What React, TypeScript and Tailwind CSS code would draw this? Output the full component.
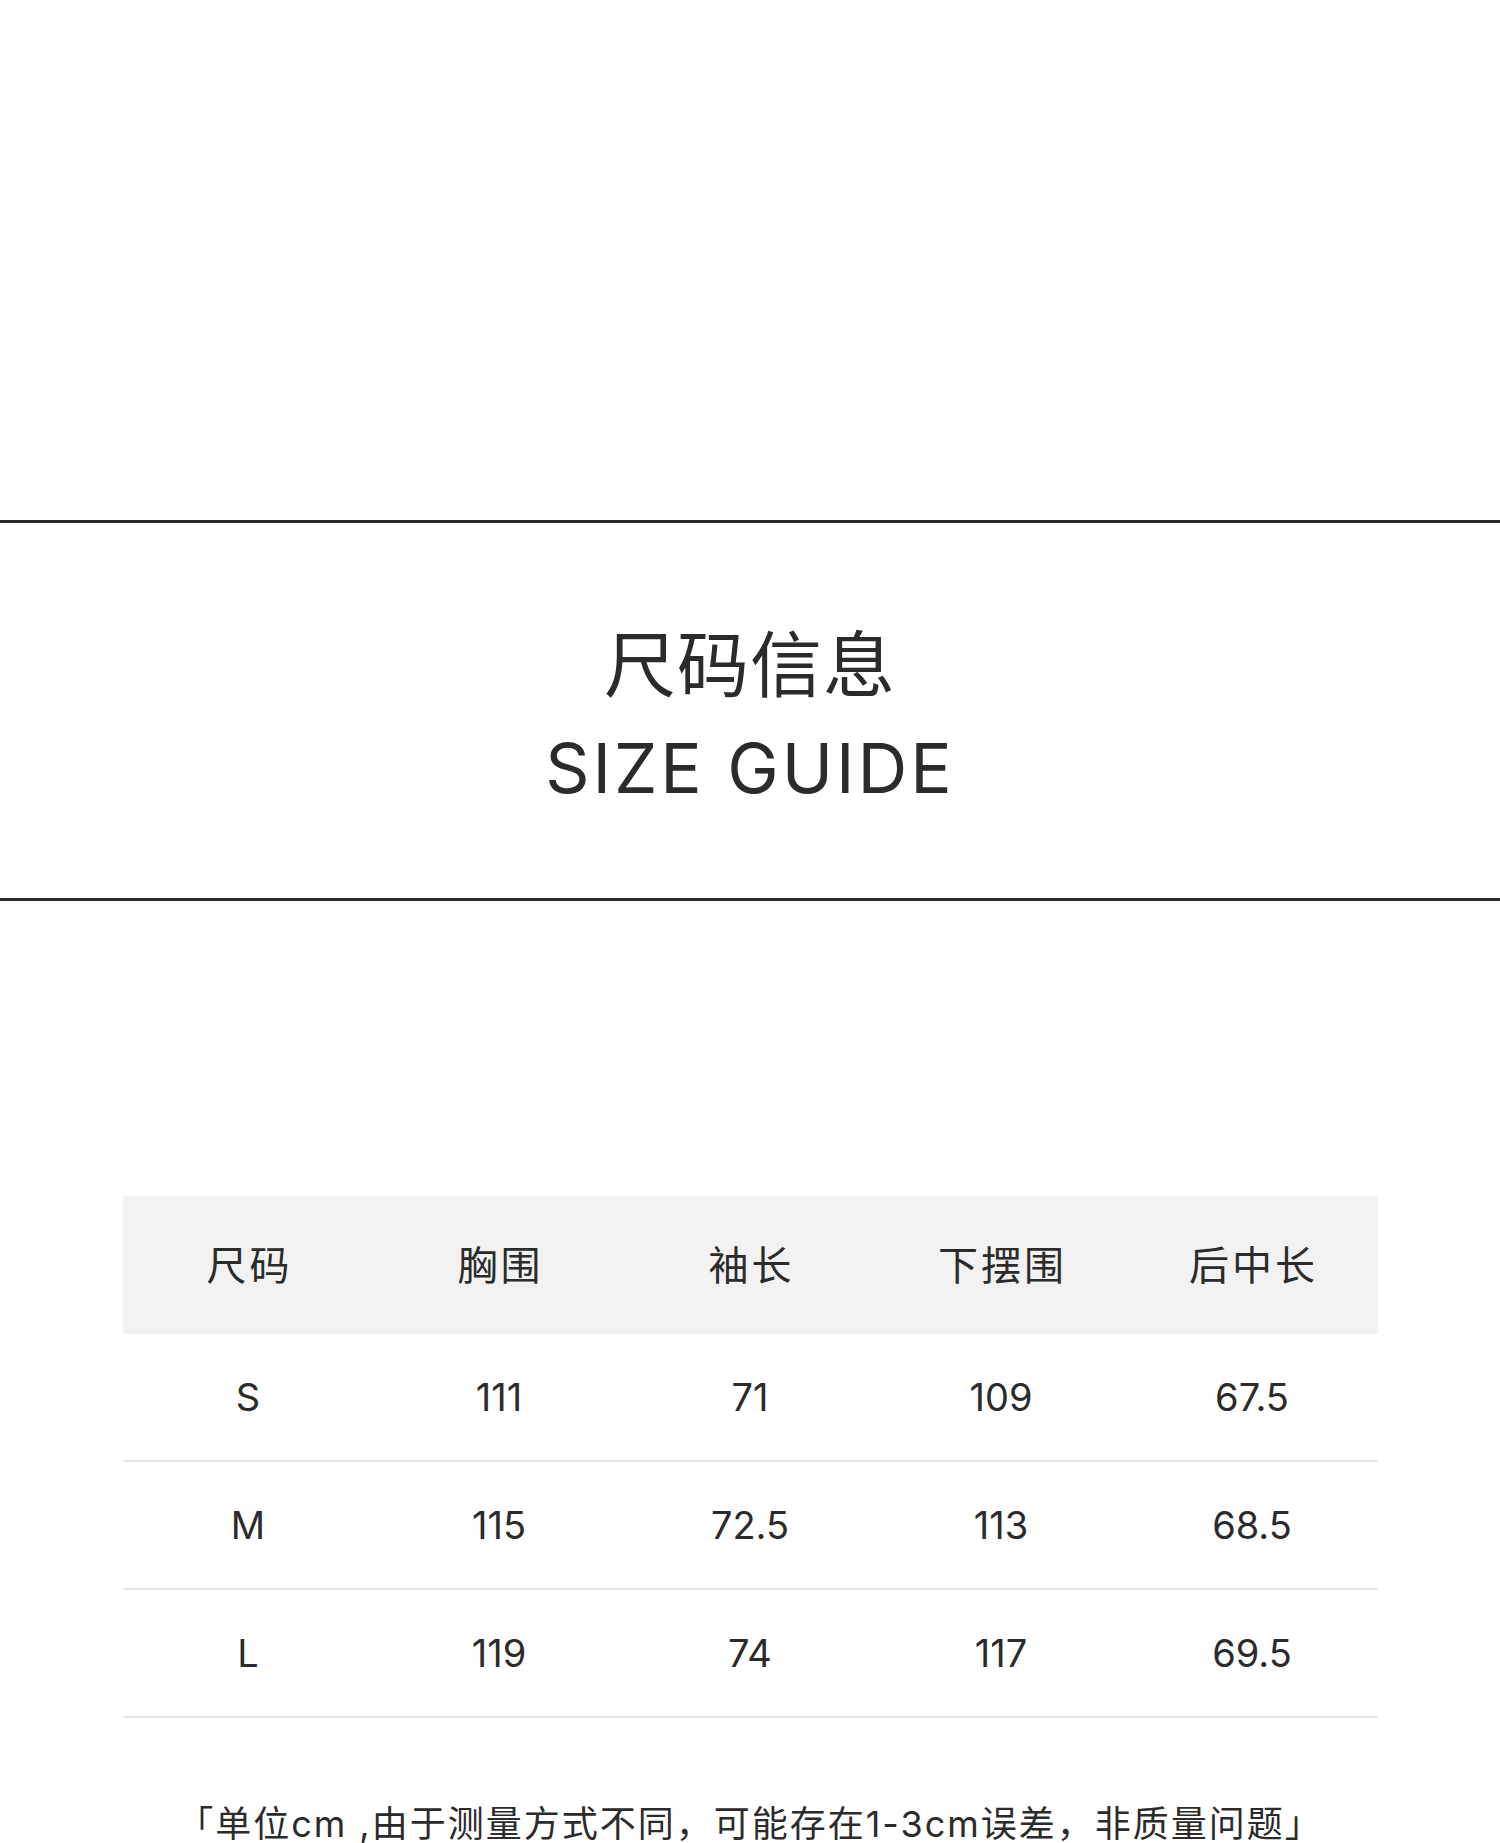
import React from "react";

const headers = ["尺码", "胸围", "袖长", "下摆围", "后中长"];
const rows = [
  ["S", "111", "71", "109", "67.5"],
  ["M", "115", "72.5", "113", "68.5"],
  ["L", "119", "74", "117", "69.5"],
];

const cjk = { fontFamily: '"Noto Sans CJK SC", sans-serif' };
const latin = { fontFamily: 'Inter, "Noto Sans CJK SC", sans-serif' };

export default function App() {
  return (
    <div className="w-[1500px] h-[1843px] overflow-hidden bg-white text-[#2b2b2b]">
      <div className="h-[520px]" />
      <div className="h-[3px] bg-[#2b2b2b]" />
      <div className="h-[375px] flex flex-col items-center pt-[101px]">
        <div className="text-[72px] leading-[72px] tracking-[1px]" style={cjk}>
          尺码信息
        </div>
        <div className="mt-[38px] text-[69px] leading-[69px] tracking-[3px]" style={latin}>
          SIZE GUIDE
        </div>
      </div>
      <div className="h-[3px] bg-[#2b2b2b]" />
      <div className="h-[295px]" />
      <div className="w-[1255px] mx-auto">
        <div className="h-[138px] bg-[#f2f2f2] grid grid-cols-5 items-center pb-[5px]">
          {headers.map((h) => (
            <div
              key={h}
              className="text-center text-[40px] leading-[40px] tracking-[3px] pl-[3px]"
              style={cjk}
            >
              {h}
            </div>
          ))}
        </div>
        {rows.map((r) => (
          <div
            key={r[0]}
            className="h-[128px] border-b-2 border-[#e5e5e5] grid grid-cols-5 items-center"
          >
            {r.map((c, i) => (
              <div key={i} className="text-center text-[38px] leading-[38px]" style={latin}>
                {c}
              </div>
            ))}
          </div>
        ))}
      </div>
      <div
        className="mt-[88px] text-center text-[36px] leading-[36px] tracking-[2px] whitespace-nowrap"
        style={latin}
      >
        「单位cm ,由于测量方式不同，可能存在1-3cm误差，非质量问题」
      </div>
    </div>
  );
}
